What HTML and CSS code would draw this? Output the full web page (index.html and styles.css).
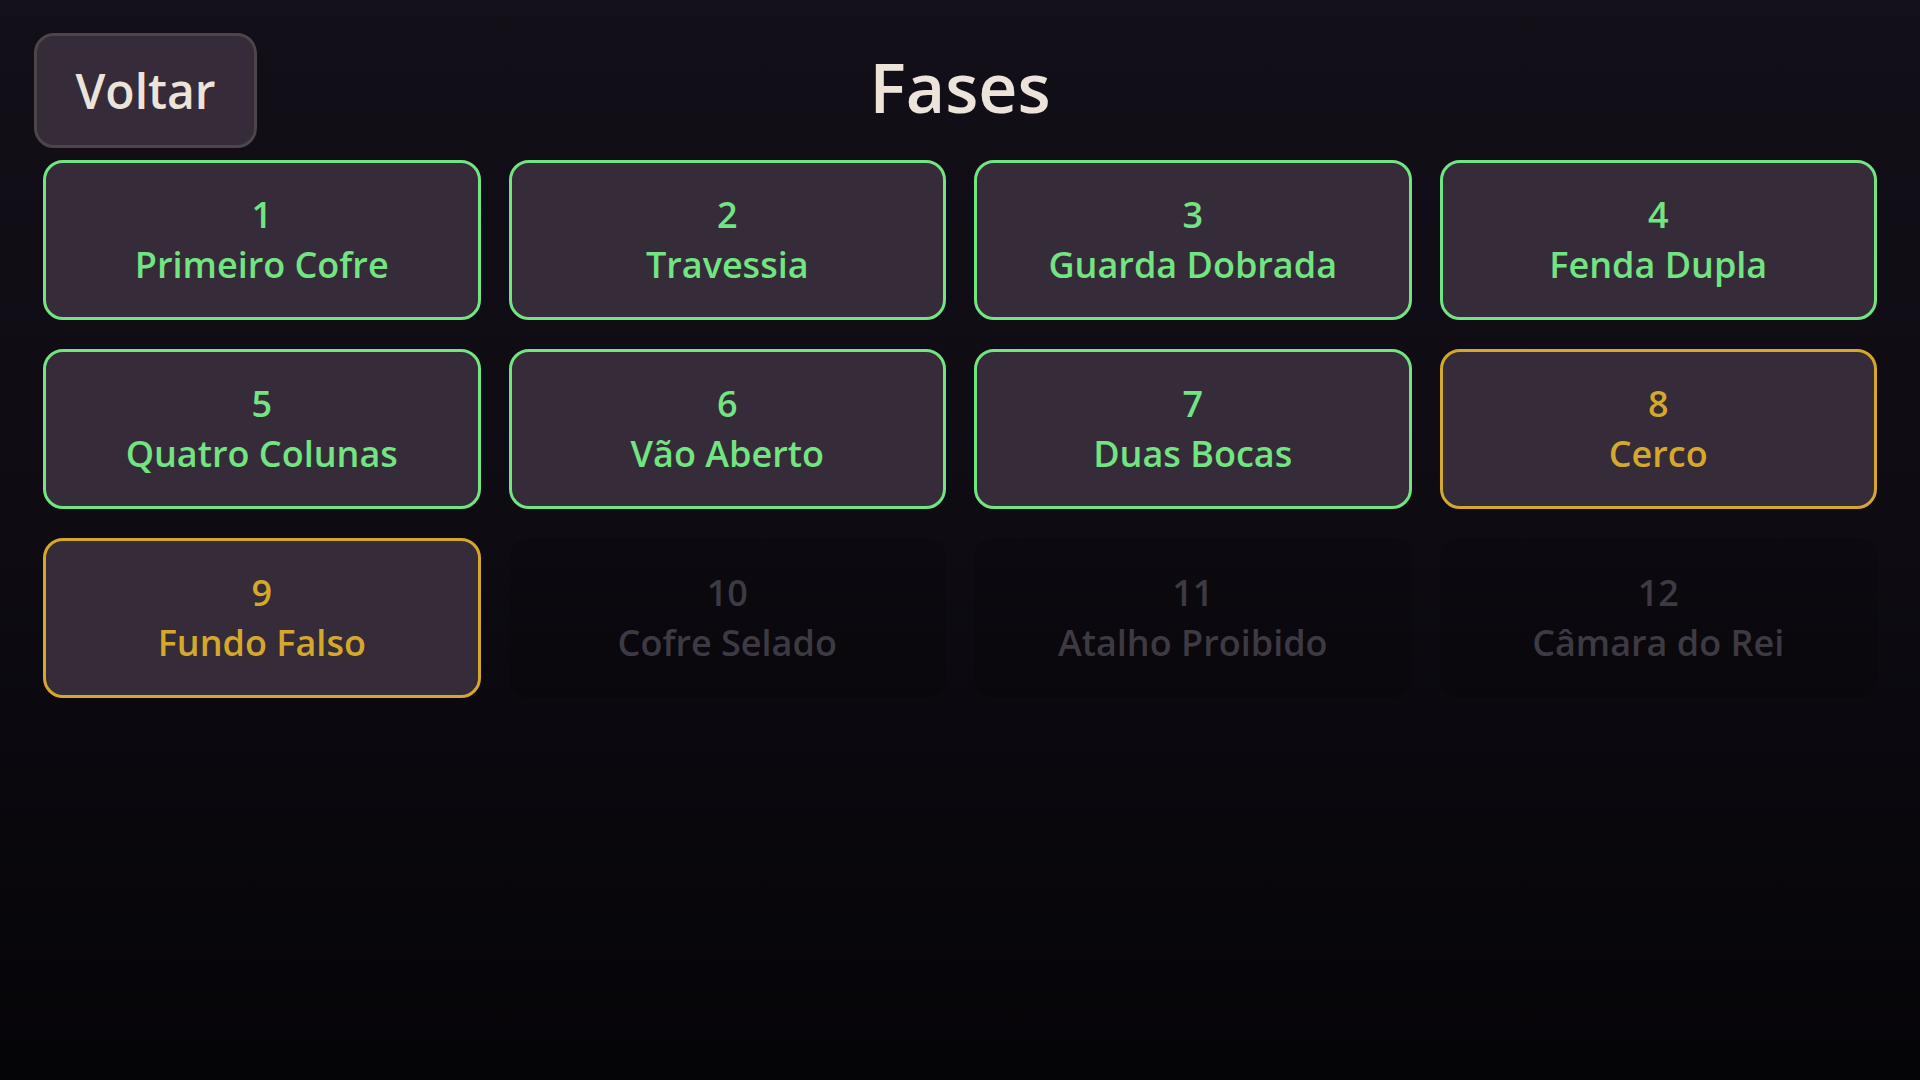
FILE: index.html
```html
<!DOCTYPE html>
<html lang="pt">
<head>
    <meta charset="UTF-8">
    <meta name="viewport" content="width=device-width, initial-scale=1.0">
    <title>Fases</title>
    <link rel="stylesheet" href="styles.css">
</head>
<body>
    <div class="screen">
        <div class="header">
            <button class="back-btn">Voltar</button>
            <h1>Fases</h1>
        </div>

        <div class="level-grid">
            <button class="level done"><span>1</span><span>Primeiro Cofre</span></button>
            <button class="level done"><span>2</span><span>Travessia</span></button>
            <button class="level done"><span>3</span><span>Guarda Dobrada</span></button>
            <button class="level done"><span>4</span><span>Fenda Dupla</span></button>
            <button class="level done"><span>5</span><span>Quatro Colunas</span></button>
            <button class="level done"><span>6</span><span>Vão Aberto</span></button>
            <button class="level done"><span>7</span><span>Duas Bocas</span></button>
            <button class="level open"><span>8</span><span>Cerco</span></button>
            <button class="level open"><span>9</span><span>Fundo Falso</span></button>
            <button class="level locked"><span>10</span><span>Cofre Selado</span></button>
            <button class="level locked"><span>11</span><span>Atalho Proibido</span></button>
            <button class="level locked"><span>12</span><span>Câmara do Rei</span></button>
        </div>
    </div>
</body>
</html>
```

FILE: styles.css
```css
html, body {
    margin: 0;
    height: 100%;
}
body {
    font-family: "Open Sans", "Noto Sans", sans-serif;
    font-weight: 600;
    background:
        linear-gradient(#15111c 0, #15111c 16px, transparent 16px),
        linear-gradient(180deg, #120f18 0%, #0e0b13 50%, #050407 100%);
    color: #ece4da;
    overflow: hidden;
}
.screen {
    height: 1080px;
}
.header {
    display: grid;
    grid-template-columns: 1fr auto 1fr;
    align-items: start;
    padding: 33px 34px 0;
}
.back-btn {
    justify-self: start;
    width: 223px;
    height: 115px;
    box-sizing: border-box;
    background: #352b39;
    border: 3px solid #4d4549;
    border-radius: 20px;
    color: #ece4da;
    font-family: inherit;
    font-weight: 600;
    font-size: 48px;
    padding: 0;
}
h1 {
    margin: 7px 0 0;
    font-size: 68px;
    font-weight: 600;
    line-height: normal;
}
.level-grid {
    display: grid;
    grid-template-columns: repeat(4, 1fr);
    grid-auto-rows: 160px;
    gap: 29px 28px;
    padding: 12px 43px 0;
}
.level {
    display: flex;
    flex-direction: column;
    justify-content: center;
    align-items: center;
    box-sizing: border-box;
    background: #352b39;
    border: 3px solid transparent;
    border-radius: 20px;
    font-family: inherit;
    font-weight: 600;
    font-size: 36px;
    line-height: 50px;
    padding: 0;
}
.done {
    border-color: #72e482;
    color: #72e482;
}
.open {
    border-color: #d4a82a;
    color: #d4a82a;
}
.locked {
    background: rgba(0, 0, 0, 0.14);
    color: #3d3a43;
}
```
